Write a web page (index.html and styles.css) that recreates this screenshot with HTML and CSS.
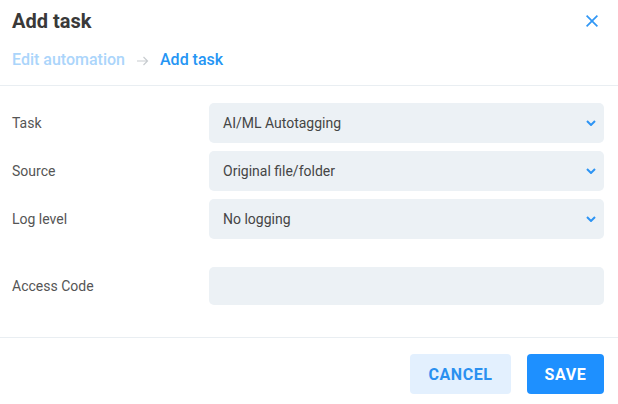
FILE: index.html
```html
<!DOCTYPE html>
<html lang="en">
<head>
    <meta charset="UTF-8">
    <meta name="viewport" content="width=device-width, initial-scale=1.0">
    <title>Add task</title>
    <link rel="stylesheet" href="styles.css">
</head>
<body>
    <div class="dialog">
        <div class="dialog-header">
            <div class="title-row">
                <h2>Add task</h2>
                <button class="close-button" aria-label="Close">
                    <svg viewBox="5 5 14 14" width="12" height="12"><path fill="currentColor" d="M19 6.41L17.59 5 12 10.59 6.41 5 5 6.41 10.59 12 5 17.59 6.41 19 12 13.41 17.59 19 19 17.59 13.41 12z"/></svg>
                </button>
            </div>
            <div class="breadcrumb">
                <span class="crumb">Edit automation</span>
                <svg class="crumb-arrow" viewBox="0 0 12 10" width="12" height="10"><path d="M0 5h10.5M6.5 1l4 4-4 4" fill="none" stroke="currentColor" stroke-width="1.2"/></svg>
                <span class="crumb active">Add task</span>
            </div>
        </div>

        <div class="dialog-body">
            <div class="form-row">
                <label for="task">Task</label>
                <div class="select">
                    <span>AI/ML Autotagging</span>
                    <svg class="chevron" viewBox="0 0 10 6" width="10" height="6"><path d="M1 1l4 4 4-4" fill="none" stroke="currentColor" stroke-width="2"/></svg>
                </div>
            </div>
            <div class="form-row">
                <label for="source">Source</label>
                <div class="select">
                    <span>Original file/folder</span>
                    <svg class="chevron" viewBox="0 0 10 6" width="10" height="6"><path d="M1 1l4 4 4-4" fill="none" stroke="currentColor" stroke-width="2"/></svg>
                </div>
            </div>
            <div class="form-row">
                <label for="loglevel">Log level</label>
                <div class="select">
                    <span>No logging</span>
                    <svg class="chevron" viewBox="0 0 10 6" width="10" height="6"><path d="M1 1l4 4 4-4" fill="none" stroke="currentColor" stroke-width="2"/></svg>
                </div>
            </div>
            <div class="form-row spaced">
                <label for="accessCode">Access Code</label>
                <input type="text" id="accessCode" class="text-input">
            </div>
        </div>

        <div class="dialog-footer">
            <button class="btn btn-light">Cancel</button>
            <button class="btn btn-primary">Save</button>
        </div>
    </div>
</body>
</html>
```

FILE: styles.css
```css
body {
    margin: 0;
    font-family: 'Roboto', 'Liberation Sans', sans-serif;
    background: #fff;
}

.dialog {
    width: 618px;
    height: 404px;
    background: #fff;
}

.dialog-header {
    padding: 9px 12px 15px;
    border-bottom: 1px solid #e9eef2;
}

.title-row {
    display: flex;
    justify-content: space-between;
    align-items: center;
}

h2 {
    margin: 0;
    font-size: 20px;
    line-height: 24px;
    font-weight: 700;
    color: #393939;
}

.close-button {
    background: none;
    border: none;
    padding: 0;
    margin-right: 8px;
    color: #3197f5;
    display: flex;
    cursor: pointer;
}

.breadcrumb {
    margin-top: 17px;
    display: flex;
    align-items: center;
    font-size: 16px;
    line-height: 20px;
    font-weight: 500;
}

.crumb {
    color: #abd5fb;
}

.crumb.active {
    color: #2595f4;
}

.crumb-arrow {
    color: #c8ccd0;
    margin: 1px 11px 0 12px;
}

.dialog-body {
    padding: 17px 14px 32px 12px;
    display: flex;
    flex-direction: column;
    gap: 8px;
    border-bottom: 1px solid #e9eef2;
}

.form-row {
    display: grid;
    grid-template-columns: 197px 1fr;
    align-items: center;
}

.form-row.spaced {
    margin-top: 20px;
}

label {
    font-size: 14px;
    color: #555;
}

.select {
    height: 40px;
    box-sizing: border-box;
    background: #ecf1f5;
    border-radius: 5px;
    padding: 0 8px 0 14px;
    display: flex;
    align-items: center;
    justify-content: space-between;
    font-size: 14px;
    color: #454545;
}

.chevron {
    color: #2d94f4;
}

.text-input {
    height: 38px;
    box-sizing: border-box;
    border: none;
    background: #ecf1f5;
    border-radius: 5px;
    padding: 0 14px;
    width: 100%;
    font-family: inherit;
}

.dialog-footer {
    display: flex;
    justify-content: flex-end;
    gap: 16px;
    padding: 16px 14px 10px;
}

.btn {
    height: 40px;
    border: none;
    border-radius: 4px;
    padding: 0 17px;
    font-family: inherit;
    font-size: 16px;
    font-weight: 700;
    letter-spacing: 0.6px;
    text-transform: uppercase;
    cursor: pointer;
}

.btn-light {
    background: #e3f0fe;
    color: #2a90f0;
    width: 101px;
}

.btn-primary {
    background: #1e90ff;
    color: #fff;
    width: 77px;
}
```
